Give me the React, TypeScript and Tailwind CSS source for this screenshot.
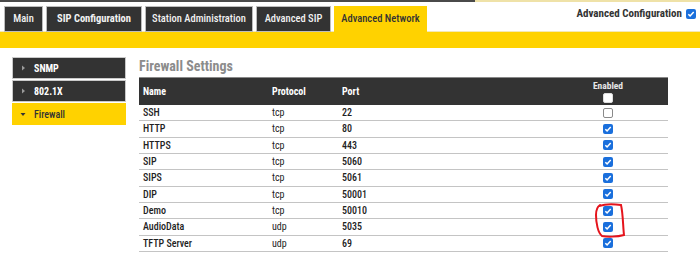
import React from 'react';

const tabs = [
  { label: 'Main', w: 'w-[39px]', cls: 'font-medium' },
  { label: 'SIP Configuration', w: 'w-[96px]', cls: 'font-bold' },
  { label: 'Station Administration', w: 'w-[108px]', cls: 'font-medium' },
  { label: 'Advanced SIP', w: 'w-[75px]', cls: 'font-medium' },
];

const rules = [
  { name: 'SSH', proto: 'tcp', port: '22', on: false },
  { name: 'HTTP', proto: 'tcp', port: '80', on: true },
  { name: 'HTTPS', proto: 'tcp', port: '443', on: true },
  { name: 'SIP', proto: 'tcp', port: '5060', on: true },
  { name: 'SIPS', proto: 'tcp', port: '5061', on: true },
  { name: 'DIP', proto: 'tcp', port: '50001', on: true },
  { name: 'Demo', proto: 'tcp', port: '50010', on: true },
  { name: 'AudioData', proto: 'udp', port: '5035', on: true },
  { name: 'TFTP Server', proto: 'udp', port: '69', on: true },
];

function Check({ on, light }: { on: boolean; light?: boolean }) {
  if (!on) {
    return (
      <div className={`w-[10px] h-[10px] rounded-[2px] border ${light ? 'border-[#ddd] bg-white' : 'border-[#8a8a8a] bg-white'}`} />
    );
  }
  return (
    <div className="w-[10px] h-[10px] rounded-[2px] bg-[#1a6fdc] flex items-center justify-center">
      <svg width="8" height="8" viewBox="0 0 8 8">
        <path d="M1.3 4.2 L3.1 5.9 L6.7 2.1" fill="none" stroke="white" strokeWidth="1.5" />
      </svg>
    </div>
  );
}

export default function App() {
  return (
    <div className="w-[700px] h-[254px] bg-white overflow-hidden font-['Roboto_Condensed',Roboto,sans-serif]">
      <div className="flex h-[2px]">
        <div className="w-[475px] bg-[#4a4a4a]" />
        <div className="flex-1 bg-[#efe2a8]" />
      </div>

      <div className="flex h-[29px] items-end justify-between">
        <div className="flex items-end pl-[4px] gap-[3px] h-full">
          {tabs.map(t => (
            <div
              key={t.label}
              className={`${t.w} h-[26px] mb-[-1px] bg-[#333] border border-[#bdbdbd] flex items-center justify-center text-[#f2f2f2] text-[10.5px] ${t.cls}`}
            >
              {t.label}
            </div>
          ))}
          <div className="w-[93px] h-[26px] mb-[-1px] bg-[#ffd200] flex items-center justify-center text-[#333] text-[10.5px] font-medium">
            Advanced Network
          </div>
        </div>
        <div className="self-start mt-[4px] mr-[4px] flex items-center gap-[4px] text-[11px] font-bold text-[#333]">
          <span>Advanced Configuration</span>
          <Check on />
        </div>
      </div>

      <div className="h-[17px] bg-[#ffd200] border-t border-[#f3e9b5]" />

      <div className="flex pt-[9px]">
        <div className="ml-[12px] w-[114px] flex flex-col gap-[1px]">
          {['SNMP', '802.1X'].map(s => (
            <div key={s} className="h-[22px] bg-[#333] border border-[#c9c9c9] flex items-center pl-[8px] gap-[8px] text-white text-[10px] font-bold">
              <svg width="5" height="6" viewBox="0 0 5 6"><path d="M1 0.5 L4 3 L1 5.5 Z" fill="#9a9a9a" /></svg>
              {s}
            </div>
          ))}
          <div className="h-[22px] bg-[#ffd200] flex items-center pl-[8px] gap-[8px] text-[#333] text-[10px] font-medium">
            <svg width="6" height="5" viewBox="0 0 6 5"><path d="M0.5 1 L5.5 1 L3 4 Z" fill="#333" /></svg>
            Firewall
          </div>
        </div>

        <div className="ml-[13px] w-[529px] relative">
          <div className="h-[18px] flex items-center text-[14px] font-bold text-[#8c8c8c]">Firewall Settings</div>
          <div className="mt-[2px] bg-[#333] h-[28px] flex items-center text-white text-[10px] font-bold border-t border-[#888]">
            <div className="w-[133px] pl-[4px]">Name</div>
            <div className="w-[70px]">Protocol</div>
            <div className="flex-1">Port</div>
            <div className="w-[64px] flex flex-col items-center mr-[28px] text-[#e6e6e6] text-[9.5px]">
              <span className="leading-[12px]">Enabled</span>
              <div className="mt-[1px]"><Check on={false} light /></div>
            </div>
          </div>
          {rules.map(r => (
            <div key={r.name} className="h-[16.33px] flex items-center border-b border-[#c4c4c4] text-[10px] text-[#222]">
              <div className="w-[133px] pl-[4px] font-medium">{r.name}</div>
              <div className="w-[70px]">{r.proto}</div>
              <div className="flex-1 font-medium">{r.port}</div>
              <div className="w-[64px] flex justify-center mr-[28px]"><Check on={r.on} /></div>
            </div>
          ))}

          {/* hand-drawn red annotation around Demo / AudioData */}
          <svg className="absolute left-[455px] top-[145px]" width="34" height="38" viewBox="0 0 34 38">
            <path
              d="M5 4 C11 2, 20 2, 27 3 C29 11, 29 25, 30 33 C23 35, 13 35, 8 34 C4 31, 2 21, 2 13 C2 8, 3 5, 6 3"
              fill="none"
              stroke="#e5141c"
              strokeWidth="2"
              strokeLinecap="round"
            />
          </svg>
        </div>
      </div>
    </div>
  );
}
